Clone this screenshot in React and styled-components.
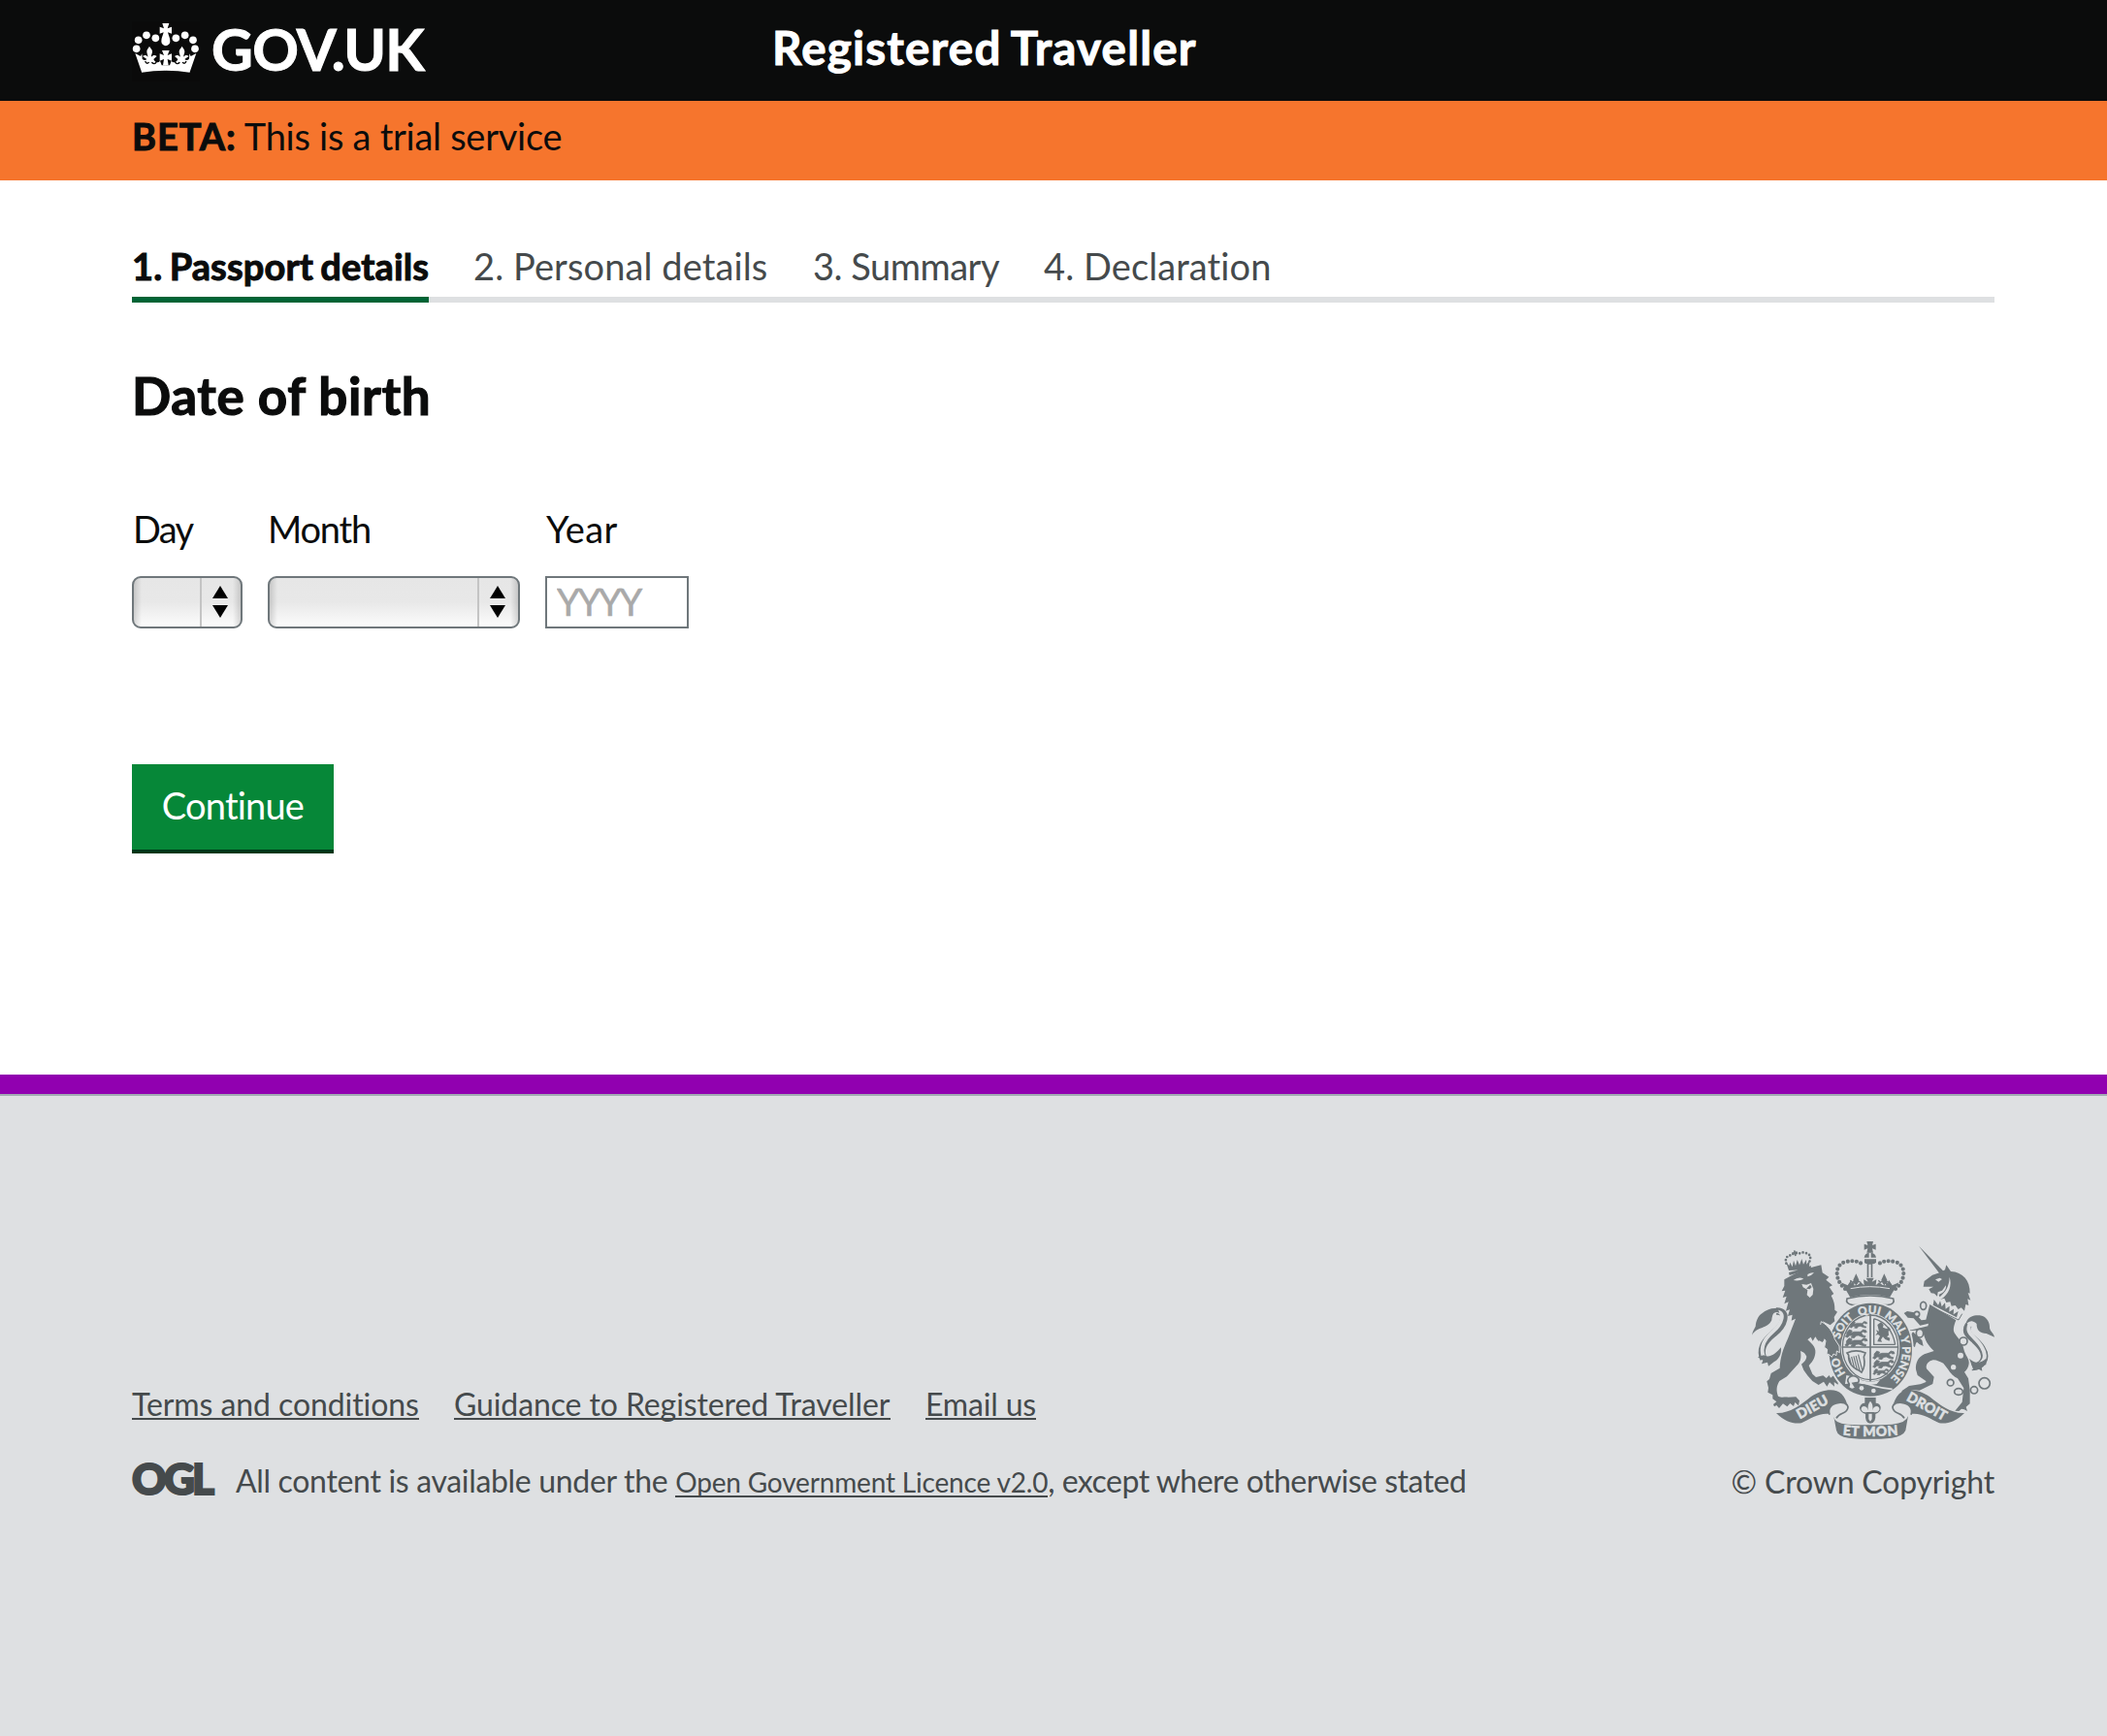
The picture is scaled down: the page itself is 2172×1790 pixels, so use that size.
import React from "react";
import styled, { createGlobalStyle } from "styled-components";

const GlobalStyle = createGlobalStyle`
  * { box-sizing: border-box; }
  body {
    margin: 0;
    background: #fff;
    color: #0b0c0c;
    font-family: Lato, "Open Sans", sans-serif;
    font-kerning: normal;
    font-variant-ligatures: none;
  }
`;

const Page = styled.div`
  min-height: 1790px;
  display: flex;
  flex-direction: column;
`;

const Header = styled.header`
  height: 104px;
  padding: 0 116px 0 136px;
  display: flex;
  background: #0b0c0c;
  color: #fff;
`;

const Brand = styled.div`
  width: 660px;
  padding-top: 22px;
  display: flex;
  gap: 12px;
`;

const Text = styled.span`
  display: block;
  flex: none;
  white-space: pre;
  font-size: ${(p) => p.$size || 38}px;
  font-weight: ${(p) => (p.$bold ? 700 : 400)};
  line-height: ${(p) => p.$line || 46}px;
  letter-spacing: ${(p) => p.$track || 0}px;
  word-spacing: ${(p) => p.$words || 0}px;
  -webkit-text-stroke: ${(p) => (p.$bold ? "1px currentColor" : "0")};
`;

const BrandName = styled(Text)`
  margin-top: -6px;
`;

const ServiceName = styled(Text)`
  margin-top: 18px;
`;

const BetaBar = styled.div`
  height: 82px;
  padding: 13px 0 0 136px;
  display: flex;
  background: #f6752d;
`;

const Main = styled.main`
  height: 922px;
  padding: 64px 116px 0 136px;
`;

const Steps = styled.ol`
  list-style: none;
  margin: 0;
  padding: 0;
  height: 62px;
  display: flex;
  border-bottom: 6px solid #dee0e2;
`;

const Step = styled.li`
  height: 62px;
  width: ${(p) => p.$width}px;
  margin-right: ${(p) => p.$gap}px;
  padding-top: 1px;
  color: ${(p) => (p.$active ? "#0b0c0c" : "#454a4c")};
  border-bottom: ${(p) => (p.$active ? "6px solid #006435" : "none")};
`;

const Heading = styled.h1`
  margin: 64px 0 0;
  font-size: 53px;
  line-height: 64px;
  font-weight: 700;
  letter-spacing: 0.6px;
  -webkit-text-stroke: 1.2px currentColor;
`;

const DateRow = styled.div`
  display: flex;
  margin-top: 82px;
`;

const Field = styled.label`
  display: flex;
  flex-direction: column;
  gap: 26px;
  width: ${(p) => p.$width}px;
  margin-right: 26px;
`;

const FieldLabel = styled(Text)`
  padding-left: ${(p) => p.$indent || 0}px;
`;

const SelectBox = styled.span`
  height: 54px;
  display: flex;
  justify-content: flex-end;
  border: 2px solid #6f777b;
  border-radius: 9px;
  background:
    linear-gradient(90deg, rgba(0, 0, 0, 0.14), rgba(0, 0, 0, 0) 8px),
    linear-gradient(270deg, rgba(0, 0, 0, 0.14), rgba(0, 0, 0, 0) 8px),
    linear-gradient(#e6e6e6, #e8e8e8 50%, #fcfcfc);
`;

const Stepper = styled.span`
  width: 42px;
  padding: 0 2px 1px 0;
  display: flex;
  flex-direction: column;
  align-items: center;
  justify-content: center;
  gap: 7px;
  border-left: 2px solid #c4c4c4;
`;

const Arrow = styled.span`
  width: 0;
  height: 0;
  border-left: 8.5px solid transparent;
  border-right: 8.5px solid transparent;
  ${(p) => (p.$down ? "border-top" : "border-bottom")}: 13.5px solid #000;
`;

const YearInput = styled.input`
  width: 148px;
  height: 54px;
  margin: 0;
  padding: 0 0 2px 10px;
  border: 2px solid #6f777b;
  border-radius: 0;
  background: #fff;
  font: 400 38px/46px Lato, sans-serif;
  letter-spacing: -2.2px;
  &::placeholder {
    color: #a9a9a9;
    opacity: 1;
    -webkit-text-stroke: 0.6px #a9a9a9;
  }
`;

const Continue = styled.button`
  display: block;
  width: 208px;
  height: 92px;
  margin: 140px 0 0;
  padding: 0 0 4px;
  border: 0;
  border-bottom: 4px solid #003618;
  background: #068738;
  color: #fff;
  font: 400 38px/46px Lato, sans-serif;
  font-variant-ligatures: none;
  letter-spacing: -0.8px;
`;

const Footer = styled.footer`
  flex: 1;
  padding: 152px 116px 0 136px;
  display: flex;
  justify-content: space-between;
  align-items: flex-start;
  border-top: 20px solid #9100b0;
  background: #dee0e2;
  box-shadow: inset 0 2px 0 #a1acb2;
  color: #454a4c;
`;

const FooterMain = styled.div`
  padding-top: 148px;
`;

const FooterLinks = styled.nav`
  display: flex;
  gap: 36px;
`;

const FooterLink = styled.a`
  display: block;
  height: 36px;
  white-space: nowrap;
  width: ${(p) => p.$width}px;
  font-size: 32px;
  line-height: 40px;
  letter-spacing: ${(p) => p.$track}px;
  border-bottom: 2px solid #454a4c;
`;

const Licence = styled.div`
  display: flex;
  margin-top: 43px;
  align-items: flex-start;
`;

const Ogl = styled.span`
  width: 107px;
  height: 40px;
  font-size: 44px;
  font-weight: 900;
  line-height: 34px;
  letter-spacing: -2.8px;
  -webkit-text-stroke: 2.2px #454a4c;
`;

const LicenceLink = styled.a`
  display: block;
  width: 384px;
  height: 37px;
  white-space: nowrap;
  font-size: 28px;
  line-height: 42px;
  letter-spacing: -0.17px;
  border-bottom: 2px solid #454a4c;
`;

const Copyright = styled.div`
  display: flex;
  flex-direction: column;
  align-items: flex-end;
  gap: 21px;
`;

const CrownHalf = () => (
  <g>
    <path d="M78 223L58 165l17 9 4-8 1 16c4 5 10 5 14 1l-13-9c6-5 13-3 16 2 1-6-3-9-3-17 0-7 6-11 8-16 2 5 9 9 9 16 0 8-4 11-3 17 4-5 11-7 17-2l-10 9c3 10 14 13 20 5l5 14h13v16q-40 0-75 6z" />
    <path d="M89 189q4 11 12 4M109 193q9 9 15-2" fill="none" stroke="#0a0a0a" strokeWidth="4" />
    <circle cx="93" cy="109" r="11.500" />
    <circle cx="68" cy="124" r="11.500" />
    <circle cx="62" cy="151" r="11.500" />
    <circle cx="121" cy="118" r="11.500" />
  </g>
);

const Crown = () => (
  <svg width="70" height="62" viewBox="48 66 210 186" fill="#fff">
    <rect x="48" y="66" width="210" height="186" fill="#0a0a0a" />
    <path d="M142 72h21l-5 16 13-5v21l-12-4c2 10 7 17 7 28a13.500 13.500 0 0 1-27 0c0-11 5-18 7-28l-12 4V83l13 5z" />
    <path d="M141 156h23l-6 15 13-5v22l-13-5 3 19h-17l3-19-13 5v-22l13 5z" />
    <CrownHalf />
    <g transform="translate(305 0) scale(-1 1)"><CrownHalf /></g>
  </svg>
);

const INK = "#6f777b";
const PAPER = "#dee0e2";

const Passant = ({ x, y, s = 1 }) => (
  <path
    transform={`translate(${x} ${y}) scale(${s})`}
    d="M2 10l7-8 8 3-3 6 9-3h18l7-6 8 2 2 5-6 1-4-3-5 5 5 6 7 2-2 4-11-3-7-3-7 1-5 6-9-1 4-5-8-1-6 6-6-3 4-5z"
    stroke={INK}
    strokeWidth="2"
  />
);

const Scroll = () => (
  <g>
    <path d="M183 591c40 2 75-24 108-51 32-22 75-28 94-8 10 10 15 25 22 42-6-8-15-12-26-11-22 1-38 13-30 32-32-7-62 14-90 27-27 3-50-4-78-31z" />
    <path d="M348 596c-6-20 5-34 29-37 25-2 34 12 23 25-8 10-25 8-31 23" fill={PAPER} stroke={INK} strokeWidth="5" />
  </g>
);

const RoyalArms = () => (
  <svg width="250" height="204" viewBox="108 60 750 612" fill={INK}>
    <defs>
      <path id="garter" d="M474 508A99 112 0 0 1 474 284A99 112 0 0 1 474 508" />
      <path id="motto" d="M384 658Q474 668 566 658" />
    </defs>

    {/* lion supporter */}
    <path d="M222 156l68-18 3 8-69 19zM222 150l-9-27 10 12 3-10 7 14 4-20 6 17 5-19 7 16 7-19 5 17 9-15 1 15 10-14-2 20 6-2-3 11z" />
    <path d="M214 128c-5-15 4-26 16-25 7-8 17-7 24-5 10-6 20-4 26 1 10 3 10 12 6 24" fill="none" stroke={INK} strokeWidth="8" strokeLinecap="round" strokeDasharray="0 10.500" />
    <path d="M232 97l16-4M239 88l4 17" stroke={INK} strokeWidth="5" />
    <path d="M208 178l25-14c30-12 53-23 66-25l23-6 4 24 20 13-9 9 20 17-10 5 14 21-8 6c10 20 11 28 11 44l8 6-10 16 2 13-14 12-24-12 20 27 26 15 14 38-4 20-6-2-3 12-9-6-6 8-4-14-8 5-5-14 8-9-8-18-11-15-2 16-9-12-4 12-11-15-8 13-6-12-10 8c10 10 27 22 24 42-3 22-13 30-20 38l11 26 11 10 22-5 10 8 9-9 4 8 10-7 14 15-1 13-12-8 1 14-15-13-8 13-10-15-16 10-19-12-14-16-13-18-7-18c10-8 15-15 16-24-4-9-9-14-19-17 4 22-1 36-12 46l-30 33-23 14c-10 16-10 30-4 47 14 6 18 1 31 3l24-1 11 12-3 15-11-10-4 12-11-9-9 10-13-9-12 14-8-9-7 4-3-7 10-8-12-9 0-12-15-8 2-14-5-20 8-7 5-18 27-16c1-32 10-58 25-91l24-62-13 6 3-18-14 4 6-20-12 4 8-28-13 6 7-23-12 4 8-22-11 2 8-16z" />
    <path d="M236 180q17-13 32-4-15 8-32 4zM280 162q10-7 20-5-8 10-20 12zM262 192l15 2 14-5 7 18-2 18-9 9-9-8 2-16-14-8z" fill={PAPER} />
    <path d="M276 206l11 2 6-7-5-7z" />
    <path d="M183 276C224 274 207 321 175 345C139 374 132 398 144 424" fill="none" stroke={INK} strokeWidth="22" />
    <path d="M177 276C217 274 201 316 171 341C137 370 133 400 149 430" fill="none" stroke={PAPER} strokeWidth="11" />
    <path d="M108 350c2-12 7-19 11-27 2-18 8-32 20-40 14-12 31-18 49-15l5 13c-18-7-22 5-24 23-13 28-44 18-61 46z" />
    <path d="M126 418l18-6c20 12 40-8 54-24 2 21-7 38-22 45l-17 13-3-12-18 5 4-11z" />

    {/* unicorn supporter */}
    <path d="M624 74l78 80-12 8z" />
    <path d="M638 200l3-17 25-19 22-7 17-9 4-15 14 20c37 2 60 28 59 68l-6-2 8 23-9-4 3 20-9-3-4 20-10-10-9 5-9-12-12 2-4-13-12 2-6-13-12 3-5-14c15-6 23-15 22-29l-12 16-13 5-2 13-9-9-10-1-7-12 14-8z" />
    <path d="M719 170c8 25 0 53-29 71l-6-6c24-18 34-36 35-65zM675 178l14-5 7 4-11 8z" fill={PAPER} />
    <path d="M665 239l94 43-12 23-91-45z" fill={PAPER} />
    <path d="M668 257l3-17 13 17 6-13 5 18 10-12 2 19 12-9-1 18 14-9-1 17 15-10-5 19z" />
    <path d="M758 284l-11 19-84-40" fill="none" stroke={INK} strokeWidth="3" />
    <path d="M658 255l81 49c-8 20-9 30-5 39 9 15 25 27 29 50 3 17 18 30 16 45-1 12-8 22-14 26l12 20 5 36 0 42-12 10 4 13-10-5-8-2-8 7-12-1 22-27 5-43-19-30c-11-6-23-16-30-29l-14-18c-10-4-22-11-32-10-12 2-24 13-20 27l23 25-4 22-41 20-23-2-8 10-13-3-14 14 4-18 22-15 34-5c14-5 20-7 18-10l-26-18-5-18c-2-20 8-39 26-47l30-10c-20-18-28-36-32-52l-24-12-22 2 10 14 13 18-4 18-8-4-14-17-19-22 11-10 20 0 32-8 18-4 2-8-26 6-20-22-18-2-12-14 10-6 22 4 22 24 14-2z" />
    <path d="M606 340l28 26 4 18-12-6-8-7-6 8-6-16-12-6z" />
    <path d="M778 318C758 350 797 356 819 391C838 420 821 448 788 449" fill="none" stroke={INK} strokeWidth="22" />
    <path d="M783 313C765 347 800 352 820 389C838 420 823 442 786 451" fill="none" stroke={PAPER} strokeWidth="12" />
    <path d="M768 323c2-29 24-37 51-33 19 6 25 25 24 38 2 12 12 14 15 28l-25-11c-20 0-31-12-30-30-14-15-30-8-35 8zM780 422c18 18 37 14 52 0l0 19-14 6 2 14-16-9-11 6z" />
    <g fill="none" stroke={INK} strokeWidth="5">
      <circle cx="827" cy="499" r="17" />
      <circle cx="722" cy="497" r="10" />
      <ellipse cx="747" cy="525" rx="13" ry="10" />
      <circle cx="795" cy="520" r="11" />
      <ellipse cx="638" cy="259" rx="9" ry="12" fill={PAPER} />
      <circle cx="618" cy="285" r="8" fill={PAPER} />
      <circle cx="762" cy="369" r="12" fill={PAPER} />
      <ellipse cx="627" cy="344" rx="11" ry="13" fill={PAPER} />
    </g>
    <circle cx="753" cy="413" r="9" fill={PAPER} />
    <circle cx="731" cy="449" r="8" fill={PAPER} />

    {/* crown */}
    <path d="M463 60h20l-3 12 11-4v18l-11-4 3 13h-20l3-13-11 4V68l11 4zM455 110q2-13 15-15v15zM476 95q14 2 16 15h-16z" />
    <path d="M456 115h36v10q-8 6-11 4v42h-5v-40h-7v40h-5v-42q-5 1-8-4z" />
    <g fill="none" stroke={INK} strokeWidth="12.500" strokeLinecap="round" strokeDasharray="0 13.800">
      <path d="M396 207C365 181 362 137 392 125C420 117 436 121 452 132" />
      <path d="M552 207C583 181 586 137 556 125C528 117 512 121 496 132" />
    </g>
    <path d="M398 209l-15-22 21 9 11-17 1 11 12-8-5 14q13 1 22-9l10 9-2-18 14 7-6-12h24l-6 12 14-7-2 18 10-9q9 10 22 9l-5-14 12 8 1-11 11 17 21-9-15 22-14 24q-59-16-122 0z" />
    <path d="M430 160l9 19-5 12h-8l-5-12zM517 160l9 19-5 12h-8l-5-12z" />
    <path d="M412 181l6 6 7-5 5 11 7-10 8 5M499 181l6 6 7-5 5 11 7-10 8 5" fill="none" stroke={INK} strokeWidth="4" />
    <path d="M413 206q58-12 121 0" fill="none" stroke={PAPER} strokeWidth="3" />
    <path d="M402 237q72-18 143 0 7 17-17 20H419q-23-4-17-20z" fill={PAPER} stroke={INK} strokeWidth="5" />

    {/* garter and shield */}
    <path d="M474 246c77 0 134 65 134 147 0 88-51 148-134 148S341 481 341 393c0-81 56-147 133-147z" fill={PAPER} />
    <path d="M474 251c72 0 129 62 129 142 0 84-53 146-129 146S346 477 346 393c0-79 57-142 128-142z" />
    <ellipse cx="474" cy="388" rx="91" ry="105" fill={PAPER} />
    <ellipse cx="474" cy="388" rx="86" ry="100" fill={PAPER} stroke={INK} strokeWidth="4" />
    <Passant x={412} y={306} s={0.9} />
    <Passant x={399} y={331} s={1.1} />
    <Passant x={398} y={357} s={1.15} />
    <Passant x={484} y={397} s={1.12} />
    <Passant x={484} y={425} s={1.08} />
    <Passant x={484} y={453} s={0.8} />
    <path d="M485 299q54 15 66 80M485 299v80h66" fill="none" stroke={INK} strokeWidth="4" />
    <path d="M496 318l11-8 8 8-2 8 13 5 4-8 7 9-7 6 1 12-6 5 10 4-2 9-13-5-7-8-6 9 3 7-14-1 2-6 6-11-6-5-8 3 6-10-5-7 10 4z" />
    <path d="M402 405q28-13 57 0l-5 12q6 30-7 48l-7-5q-35-15-33-48z" fill={PAPER} stroke={INK} strokeWidth="5" />
    <path d="M414 416v24M421 414v35M428 414v42M435 414v47M443 412v50" stroke={INK} strokeWidth="3.500" transform="rotate(-14 430 436)" />
    <path d="M474 283v212M386 387h175" stroke={INK} strokeWidth="5" />
    <path d="M400 474l36 8 12 8q26 8 56-1l-10 12-24 4-50-6-24 2z" fill={PAPER} />
    <path d="M423 496q36 10 70 8l-4 14-66 4z" />
    <path d="M430 488q55 24 112 29" fill="none" stroke={PAPER} strokeWidth="5" />
    <path d="M410 480c15-10 34 4 27 16l-17 3 9 14q-14 10-23-2 6-8 0-15-5-8 4-16z" fill={PAPER} stroke={INK} strokeWidth="5" />
    <circle cx="447" cy="514" r="7" fill={PAPER} />
    <circle cx="484" cy="522" r="7" fill={PAPER} />
    <g fill={PAPER} stroke={PAPER} strokeWidth="1" fontFamily="Lato, sans-serif" fontWeight="900" fontSize="35" textAnchor="middle">
      <text><textPath href="#garter" startOffset="17.500%">HO</textPath></text>
      <text><textPath href="#garter" startOffset="36%">SOIT</textPath></text>
      <text><textPath href="#garter" startOffset="49.500%">QUI</textPath></text>
      <text><textPath href="#garter" startOffset="64.500%">MAL Y</textPath></text>
      <text><textPath href="#garter" startOffset="81.500%">PENSE</textPath></text>
    </g>
    <path d="M322 308c22 12 36 32 42 54l14 22 1 20-9-5-1 14-9-5-5 10-8-8-8-2 2-14-9-6 4-20-20-30z" stroke={PAPER} strokeWidth="3" />
    <path d="M316 318l16-2 8 32-14 24-18-10z" />

    {/* motto scroll */}
    <path d="M457 543h34v17q12 0 15 12 2 15-16 22 2 29-16 29-17 0-15-29-19-7-18-20 4-15 16-14z" />
    <path d="M474 554q11 12 6 29 4-13 15-13 8 2 7 11-5 10-18 7h-20q-13 3-18-7-1-9 7-11 11 0 15 13-4-18 6-29zM469 593h10v17l-5 7-5-7z" fill={PAPER} />
    <Scroll />
    <g transform="translate(948 0) scale(-1 1)"><Scroll /></g>
    <path d="M361 602q2 20 42 24 72 4 138 0 44-4 50-26l-8 45q-7 17-43 23-65 7-133 0-34-5-38-24z" />
    <g fill={PAPER} stroke={PAPER} strokeWidth="1.500" fontFamily="Lato, sans-serif" fontWeight="900" fontSize="43" textAnchor="middle">
      <text transform="translate(302 585) rotate(-29)" letterSpacing="1">DIEU</text>
      <text transform="translate(642 583) rotate(29)">DROIT</text>
      <text fontSize="42" letterSpacing="1.500"><textPath href="#motto" startOffset="50%">ET MON</textPath></text>
    </g>
  </svg>
);

const STEPS = [
  { label: "1. Passport details", width: 306, gap: 46, track: 0.12, words: -2, active: true },
  { label: "2. Personal details", width: 303, gap: 47, track: 0.1 },
  { label: "3. Summary", width: 191, gap: 47, track: -0.5 },
  { label: "4. Declaration", width: 234, gap: 0, track: 0.1 },
];

const Select = () => (
  <SelectBox>
    <Stepper>
      <Arrow />
      <Arrow $down />
    </Stepper>
  </SelectBox>
);

export default function App() {
  return (
    <Page>
      <GlobalStyle />
      <Header>
        <Brand>
          <Crown />
          <BrandName $bold $size={59} $line={70} $track={-0.7}>GOV.UK</BrandName>
        </Brand>
        <ServiceName $bold $size={47.5} $line={62} $track={1.2} $words={-2}>Registered Traveller</ServiceName>
      </Header>
      <BetaBar>
        <Text $bold $track={0.9} $words={-2}>BETA: </Text>
        <Text $track={-0.27}>This is a trial service</Text>
      </BetaBar>
      <Main>
        <Steps>
          {STEPS.map((s) => (
            <Step key={s.label} $width={s.width} $gap={s.gap} $active={s.active}>
              <Text $bold={s.active} $track={s.track} $words={s.words}>{s.label}</Text>
            </Step>
          ))}
        </Steps>
        <Heading>Date of birth</Heading>
        <DateRow>
          <Field as="div" $width={114}>
            <FieldLabel $indent={1} $track={-1.7}>Day</FieldLabel>
            <Select />
          </Field>
          <Field as="div" $width={260}>
            <FieldLabel $track={-1.2}>Month</FieldLabel>
            <Select />
          </Field>
          <Field $width={148}>
            <FieldLabel $indent={1} $track={0.3}>Year</FieldLabel>
            <YearInput placeholder="YYYY" />
          </Field>
        </DateRow>
        <Continue>Continue</Continue>
      </Main>
      <Footer>
        <FooterMain>
          <FooterLinks>
            <FooterLink $width={296} $track={-0.08}>Terms and conditions</FooterLink>
            <FooterLink $width={450} $track={-0.1}>Guidance to Registered Traveller</FooterLink>
            <FooterLink $width={114} $track={-0.17}>Email us</FooterLink>
          </FooterLinks>
          <Licence>
            <Ogl>OGL</Ogl>
            <Text $size={32} $line={40} $track={-0.32}>{"All content is available under the "}</Text>
            <LicenceLink>Open Government Licence v2.0</LicenceLink>
            <Text $size={32} $line={40} $track={-0.5}>, except where otherwise stated</Text>
          </Licence>
        </FooterMain>
        <Copyright>
          <RoyalArms />
          <Text $size={32} $line={46} $track={-0.18}>© Crown Copyright</Text>
        </Copyright>
      </Footer>
    </Page>
  );
}
